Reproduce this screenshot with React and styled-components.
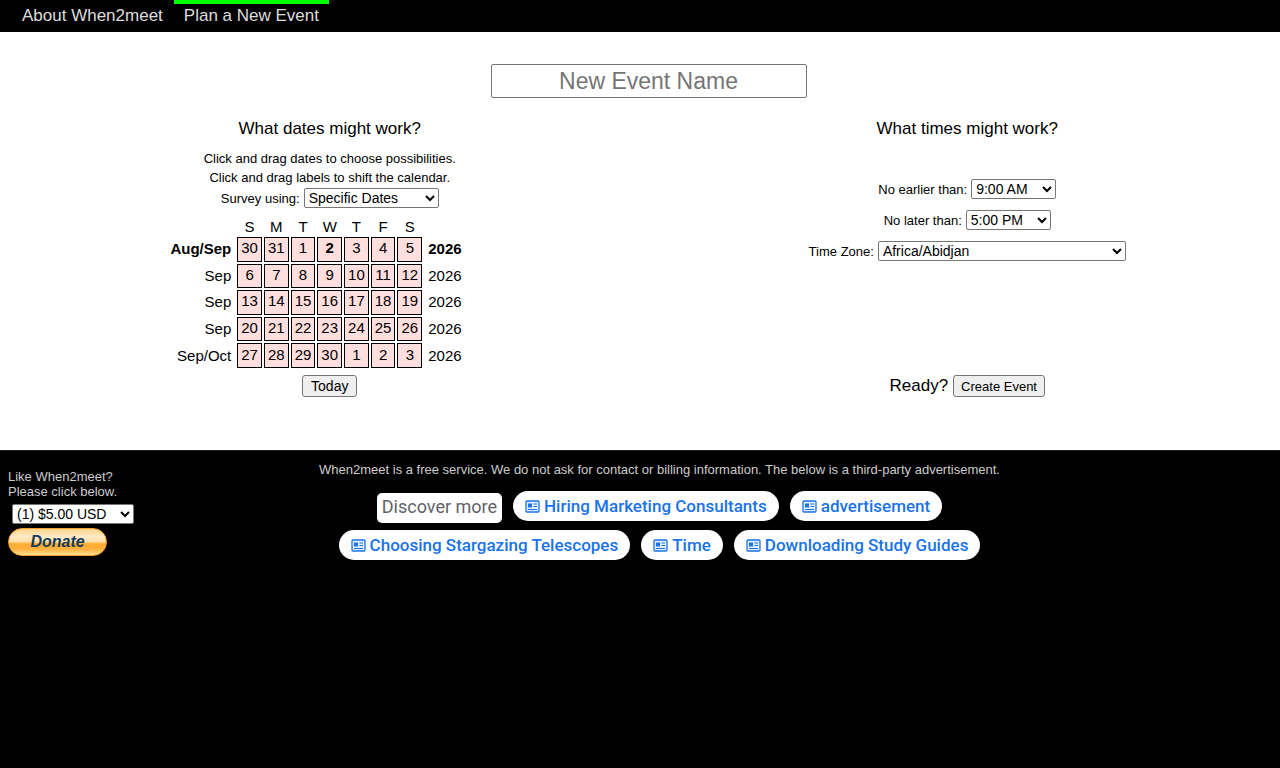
import React, { useState } from 'react';
import styled, { createGlobalStyle } from 'styled-components';

const GlobalStyle = createGlobalStyle`
   body {
      margin: 0;
      background: #000;
      color: #000;
      font-family: 'Liberation Sans', Arial, sans-serif;
      font-size: 13px;
   }
`;

const Nav = styled.nav`
   display: flex;
   gap: 1px;
   height: 32px;
   padding-left: 12px;
   background: #000;
`;

const NavLink = styled.a`
   box-sizing: border-box;
   padding: 0 10px;
   border-top: 4px solid ${props => (props.$active ? '#0f0' : 'transparent')};
   color: #ddd;
   font-size: 17px;
   line-height: 23px;
   text-decoration: none;
   white-space: nowrap;
`;

const Main = styled.main`
   padding: 32px 0 53px 17px;
   background: #fff;
`;

const EventName = styled.input`
   display: block;
   box-sizing: border-box;
   width: 316px;
   height: 34px;
   margin: 0 auto;
   padding: 1px 2px;
   border: 1px solid #767676;
   border-radius: 2px;
   background: #fff;
   font-family: inherit;
   font-size: 23px;
   text-align: center;

   &::placeholder {
      color: #757575;
   }
`;

const Columns = styled.div`
   display: grid;
   grid-template-columns: 1fr 1fr;
   gap: 12px;
   margin-top: 21px;
`;

const Column = styled.section`
   display: flex;
   flex-direction: column;
   align-items: center;
`;

const Heading = styled.h2`
   margin: 0;
   font-size: 17px;
   font-weight: normal;
   line-height: 20px;
`;

const Hints = styled.div`
   margin: 10px 0 1px;
   line-height: 19px;
   text-align: center;
`;

const Fields = styled.div`
   display: flex;
   flex-direction: column;
   align-items: center;
   gap: 11px;
   margin-top: 40px;
`;

const Field = styled.div`
   display: flex;
   align-items: center;
   gap: 4px;
`;

const Select = styled.select`
   box-sizing: border-box;
   width: ${props => props.$width};
   height: 20px;
   border: 1px solid #767676;
   border-radius: 2px;
   background-color: #fff;
   color: #000;
   font-family: inherit;
   font-size: 14px;
`;

const Calendar = styled.table`
   width: 353px;
   height: 153px;
   margin-top: 9px;
   border-spacing: 2px;
   table-layout: fixed;
   font-size: 15px;
`;

const DayName = styled.th`
   height: 16px;
   padding: 0;
   font-weight: normal;
   line-height: 16px;
`;

const Label = styled.th`
   width: 80px;
   padding: 0 4px;
   box-sizing: border-box;
   font-weight: ${props => (props.$current ? 'bold' : 'normal')};
   line-height: 16px;
   text-align: ${props => props.$align};
`;

const Day = styled.td`
   padding: 0 0 2px;
   border: 1px solid #000;
   background: #ffdede;
   font-weight: ${props => (props.$today ? 'bold' : 'normal')};
   line-height: 16px;
   text-align: center;
   cursor: pointer;
`;

const Button = styled.button`
   box-sizing: border-box;
   height: 22px;
   padding: 0 7px;
   border: 1px solid #767676;
   border-radius: 3px;
   background: #efefef;
   color: #000;
   font-family: inherit;
   font-size: ${props => (props.$small ? '13px' : '14px')};
`;

const TodayButton = styled(Button)`
   margin-top: 5px;
   padding: 0 8px;
`;

const Ready = styled.div`
   display: flex;
   align-items: center;
   gap: 5px;
   margin-top: auto;
   font-size: 17px;
`;

const Footer = styled.footer`
   display: grid;
   grid-template-columns: 144px 1fr 113px;
   padding-left: 8px;
   border-top: 1px solid #222;
   background: #000;
   color: #ccc;
`;

const Donation = styled.form`
   display: flex;
   flex-direction: column;
   align-items: flex-start;
   padding-top: 18px;
   line-height: 15px;
`;

const Amount = styled(Select)`
   margin: 5px 4px 4px;
`;

const DonateButton = styled.button`
   width: 99px;
   height: 28px;
   padding: 0;
   border: 1px solid #ffa02a;
   border-radius: 14px;
   background: linear-gradient(#ffd489 0%, #ffebc8 30%, #ffdfa6 48%, #ffab2e 58%, #ffb340 78%, #ffdf94 100%);
   color: #143a5c;
   font-family: inherit;
   font-size: 16px;
   font-style: italic;
   font-weight: bold;
`;

const Ads = styled.div`
   padding-top: 11px;
   text-align: center;
`;

const Notice = styled.p`
   margin: 0;
   line-height: 15px;
`;

const Chips = styled.div`
   display: flex;
   flex-wrap: wrap;
   justify-content: center;
   gap: 7px 11px;
   max-width: 728px;
   margin: 14px auto 0;
   font-family: Roboto, sans-serif;
`;

const Discover = styled.span`
   height: 30px;
   margin-top: 2px;
   padding: 0 5px;
   border-radius: 5px;
   background: #fff;
   color: #5f6368;
   font-size: 18px;
   line-height: 28px;
`;

const Chip = styled.a`
   display: flex;
   align-items: center;
   gap: 4px;
   height: 30px;
   padding: 0 12px;
   border-radius: 15px;
   background: #fff;
   color: #1a73e8;
   font-size: 17px;
   font-weight: 500;
   text-decoration: none;
`;

const AdIcon = () => (
   <svg width="15" height="15" viewBox="0 0 15 15" fill="none" stroke="#1a73e8" aria-hidden="true">
      <rect x="1" y="2" width="13" height="11" rx="1" fill="#e3eefc" strokeWidth="1.3" />
      <path d="M3 4.5h4v4H3z" fill="#1a73e8" stroke="none" />
      <path d="M8.5 5H12M8.5 7.5H12M3 10.5H12" strokeWidth="1.1" />
   </svg>
);

const dayNames = ['S', 'M', 'T', 'W', 'T', 'F', 'S'];

const weeks = [
   { month: 'Aug/Sep', days: [30, 31, 1, 2, 3, 4, 5], current: true },
   { month: 'Sep', days: [6, 7, 8, 9, 10, 11, 12] },
   { month: 'Sep', days: [13, 14, 15, 16, 17, 18, 19] },
   { month: 'Sep', days: [20, 21, 22, 23, 24, 25, 26] },
   { month: 'Sep/Oct', days: [27, 28, 29, 30, 1, 2, 3] }
];

const ads = [
   'Hiring Marketing Consultants',
   'advertisement',
   'Choosing Stargazing Telescopes',
   'Time',
   'Downloading Study Guides'
];

const App = () => {
   const [name, setName] = useState('');

   return (
      <>
         <GlobalStyle />
         <Nav>
            <NavLink href="#about">About When2meet</NavLink>
            <NavLink href="#plan" $active>
               Plan a New Event
            </NavLink>
         </Nav>
         <Main>
            <EventName
               type="text"
               aria-label="New Event Name"
               placeholder="New Event Name"
               value={name}
               onChange={e => setName(e.target.value)}
            />
            <Columns>
               <Column>
                  <Heading>What dates might work?</Heading>
                  <Hints>
                     Click and drag dates to choose possibilities.
                     <br />
                     Click and drag labels to shift the calendar.
                  </Hints>
                  <Field>
                     <label htmlFor="survey">Survey using:</label>
                     <Select id="survey" $width="135px">
                        <option>Specific Dates</option>
                        <option>Days of the Week</option>
                     </Select>
                  </Field>
                  <Calendar>
                     <thead>
                        <tr>
                           <Label as="td" />
                           {dayNames.map((day, i) => (
                              <DayName key={i} scope="col">
                                 {day}
                              </DayName>
                           ))}
                           <Label as="td" />
                        </tr>
                     </thead>
                     <tbody>
                        {weeks.map((week, i) => (
                           <tr key={i}>
                              <Label scope="row" $align="right" $current={week.current}>
                                 {week.month}
                              </Label>
                              {week.days.map(day => (
                                 <Day key={day} $today={week.current && day === 2}>
                                    {day}
                                 </Day>
                              ))}
                              <Label as="td" $align="left" $current={week.current}>
                                 2026
                              </Label>
                           </tr>
                        ))}
                     </tbody>
                  </Calendar>
                  <TodayButton type="button">Today</TodayButton>
               </Column>
               <Column>
                  <Heading>What times might work?</Heading>
                  <Fields>
                     <Field>
                        <label htmlFor="earliest">No earlier than:</label>
                        <Select id="earliest" $width="85px">
                           <option>9:00 AM</option>
                        </Select>
                     </Field>
                     <Field>
                        <label htmlFor="latest">No later than:</label>
                        <Select id="latest" $width="85px">
                           <option>5:00 PM</option>
                        </Select>
                     </Field>
                     <Field>
                        <label htmlFor="zone">Time Zone:</label>
                        <Select id="zone" $width="248px">
                           <option>Africa/Abidjan</option>
                        </Select>
                     </Field>
                  </Fields>
                  <Ready>
                     Ready?
                     <Button type="button" $small>
                        Create Event
                     </Button>
                  </Ready>
               </Column>
            </Columns>
         </Main>
         <Footer>
            <Donation>
               <label htmlFor="amount">
                  Like When2meet?
                  <br />
                  Please click below.
               </label>
               <Amount id="amount" $width="122px">
                  <option>(1) $5.00 USD</option>
               </Amount>
               <DonateButton type="button">Donate</DonateButton>
            </Donation>
            <Ads>
               <Notice>
                  When2meet is a free service. We do not ask for contact or billing information. The
                  below is a third-party advertisement.
               </Notice>
               <Chips>
                  <Discover>Discover more</Discover>
                  {ads.map(ad => (
                     <Chip key={ad} href="#ad">
                        <AdIcon />
                        {ad}
                     </Chip>
                  ))}
               </Chips>
            </Ads>
         </Footer>
      </>
   );
};

export default App;
